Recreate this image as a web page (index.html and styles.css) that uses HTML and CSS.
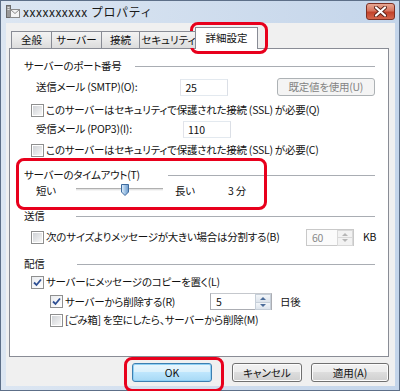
FILE: index.html
```html
<!DOCTYPE html>
<html lang="ja">
<head>
    <meta charset="UTF-8">
    <meta name="viewport" content="width=device-width, initial-scale=1.0">
    <title>プロパティ - 詳細設定</title>
    <link rel="stylesheet" href="styles.css">
</head>
<body>
<div class="window">
    <div class="titlebar">
        <svg class="app-icon" width="14" height="14" viewBox="0 0 14 14">
            <rect x="0.5" y="0.5" width="4" height="12" fill="#9a9a9a" stroke="#6b6b6b"/>
            <rect x="1.5" y="2" width="2" height="1" fill="#e0e0e0"/>
            <rect x="1.5" y="4" width="2" height="1" fill="#e0e0e0"/>
            <rect x="4.5" y="4.5" width="9" height="8" fill="#f4f4f4" stroke="#8a8a8a"/>
            <path d="M4.5 4.5 L9 8.5 L13.5 4.5" fill="none" stroke="#8a8a8a"/>
        </svg>
        <span class="title">xxxxxxxxxx プロパティ</span>
        <div class="close">
            <svg width="13" height="11" viewBox="0 0 13 11">
                <path d="M2 1.5 L11 9.5 M11 1.5 L2 9.5" stroke="#5a2219" stroke-width="4" stroke-linecap="round"/>
                <path d="M2 1.5 L11 9.5 M11 1.5 L2 9.5" stroke="#ffffff" stroke-width="2.2" stroke-linecap="round"/>
            </svg>
        </div>
    </div>

    <div class="client">
        <div class="tabs">
            <div class="tab tab-general">全般</div>
            <div class="tab tab-server">サーバー</div>
            <div class="tab tab-connect">接続</div>
            <div class="tab tab-security">セキュリティ</div>
            <div class="tab tab-advanced active">詳細設定</div>
        </div>

        <div class="panel">
            <div class="row heading r-port">
                <span class="heading-text w-port">サーバーのポート番号</span><span class="rule"></span>
            </div>
            <div class="row field-row r-smtp">
                <span class="label">送信メール (SMTP)(O):</span>
                <span class="textbox">25</span>
                <span class="btn-default disabled">既定値を使用(U)</span>
            </div>
            <div class="row check-row r-ssl1">
                <span class="check"></span>このサーバーはセキュリティで保護された接続 (SSL) が必要(Q)
            </div>
            <div class="row field-row r-pop3">
                <span class="label">受信メール (POP3)(I):</span>
                <span class="textbox">110</span>
            </div>
            <div class="row check-row r-ssl2">
                <span class="check"></span>このサーバーはセキュリティで保護された接続 (SSL) が必要(C)
            </div>

            <div class="row heading r-timeout">
                <span class="heading-text w-timeout">サーバーのタイムアウト(T)</span><span class="rule"></span>
            </div>
            <div class="row slider-row r-slider">
                <span class="slider-label">短い</span>
                <span class="track">
                    <svg class="thumb" width="8" height="12" viewBox="0 0 8 12">
                        <defs>
                            <linearGradient id="th" x1="0" y1="0" x2="1" y2="0">
                                <stop offset="0" stop-color="#e8f2fb"/>
                                <stop offset="0.5" stop-color="#9fc3e6"/>
                                <stop offset="1" stop-color="#6c98c8"/>
                            </linearGradient>
                        </defs>
                        <path d="M0.5 0.5 H7.5 V8 L4 11.5 L0.5 8 Z" fill="url(#th)" stroke="#3d6a9e"/>
                    </svg>
                </span>
                <span class="slider-long">長い</span>
                <span>3 分</span>
            </div>

            <div class="row heading r-send">
                <span class="heading-text w-send">送信</span><span class="rule"></span>
            </div>
            <div class="row check-row r-split">
                <span class="check"></span><span class="grow">次のサイズよりメッセージが大きい場合は分割する(B)</span>
                <span class="spin spin-size disabled"><span class="spin-val">60</span><span class="spin-btns"><i class="up"></i><i class="down"></i></span></span>
                <span class="unit">KB</span>
            </div>

            <div class="row heading r-deliver">
                <span class="heading-text w-deliver">配信</span><span class="rule"></span>
            </div>
            <div class="row check-row r-copy">
                <span class="check checked"><svg width="9" height="9" viewBox="0 0 9 9"><path d="M1 4.5 L3.5 7 L8 1.5" fill="none" stroke="#2e4f93" stroke-width="1.8"/></svg></span>サーバーにメッセージのコピーを置く(L)
            </div>
            <div class="row check-row sub r-delete">
                <span class="check checked"><svg width="9" height="9" viewBox="0 0 9 9"><path d="M1 4.5 L3.5 7 L8 1.5" fill="none" stroke="#2e4f93" stroke-width="1.8"/></svg></span><span class="delete-text">サーバーから削除する(R)</span>
                <span class="spin spin-days"><span class="spin-val">5</span><span class="spin-btns"><i class="up"></i><i class="down"></i></span></span>
                <span class="unit-days">日後</span>
            </div>
            <div class="row check-row sub r-trash">
                <span class="check"></span>[ごみ箱] を空にしたら、サーバーから削除(M)
            </div>
        </div>

        <div class="buttons">
            <span class="button ok">OK</span>
            <span class="button cancel">キャンセル</span>
            <span class="button apply">適用(A)</span>
        </div>
    </div>

    <div class="mark mark-tab"></div>
    <div class="mark mark-timeout"></div>
    <div class="mark mark-ok"></div>
</div>
</body>
</html>
```

FILE: styles.css
```css
body {
    margin: 0;
    background-color: #ffffff;
    font-family: "Noto Sans CJK JP", "Noto Sans", sans-serif;
    font-size: 10.5px;
    line-height: 16px;
    color: #111;
}
.window {
    position: relative;
    width: 400px;
    height: 391px;
    box-sizing: border-box;
    border: 1px solid #5d6f88;
    background: linear-gradient(to right, #dce6f2, #c4d5ea);
    padding: 0 4px 4px 5px;
}
.titlebar {
    height: 22px;
    display: flex;
    align-items: center;
}
.app-icon {
    margin-top: -1px;
}
.title {
    margin-left: 3px;
    font-size: 12px;
    letter-spacing: 0.5px;
    color: #1a1a1a;
    flex: 1;
}
.close {
    width: 29px;
    height: 17px;
    margin-top: -2px;
    box-sizing: border-box;
    border: 1px solid #7d3024;
    border-radius: 3px;
    background: linear-gradient(#e8a793, #d7755e 45%, #c2422a 55%, #d5664c);
    display: flex;
    align-items: center;
    justify-content: center;
}
.client {
    height: 363px;
    background-color: #f0f0f0;
    display: flex;
    flex-direction: column;
}
.tabs {
    display: flex;
    align-items: flex-end;
    height: 21px;
    margin-top: 4px;
    padding-left: 5px;
    position: relative;
    z-index: 1;
    white-space: nowrap;
    font-feature-settings: "palt";
}
.tab {
    height: 17px;
    box-sizing: border-box;
    border: 1px solid #898c95;
    border-bottom: none;
    margin-right: -1px;
    background: linear-gradient(#f3f3f3, #e9e9e9 50%, #dcdcdc);
    text-align: center;
    line-height: 15px;
    overflow: hidden;
}
.tab-general { width: 41px; }
.tab-server { width: 51px; }
.tab-connect { width: 39px; }
.tab-security { width: 59px; }
.tab.active {
    width: 63px;
    height: 22px;
    margin-left: -2px;
    margin-bottom: -1px;
    background: #ffffff;
    line-height: 20px;
}
.panel {
    height: 309px;
    box-sizing: border-box;
    margin: 0 6px 0 3px;
    border: 1px solid #898c95;
    background-color: #ffffff;
    padding: 9px 13px 0 14px;
}
.row {
    display: flex;
    align-items: center;
    height: 16px;
    white-space: nowrap;
    letter-spacing: -0.25px;
    font-feature-settings: "palt";
}
.heading-text { flex: none; }
.w-port { width: 111px; }
.w-timeout { width: 144px; }
.w-send { width: 52px; }
.w-deliver { width: 53px; }
.rule {
    flex: 1;
    height: 1px;
    background-color: #a9adb3;
}
.field-row {
    height: 18px;
    padding-left: 12px;
}
.label {
    width: 147px;
}
.textbox {
    width: 48px;
    height: 17px;
    box-sizing: border-box;
    border: 1px solid #abadb3;
    border-top-color: #e3e9ef;
    border-left-color: #e2e3ea;
    border-right-color: #dbdfe6;
    border-bottom-color: #e3e9ef;
    background: #fff;
    padding-left: 4px;
    line-height: 15px;
}
.btn-default {
    width: 100px;
    height: 18px;
    margin-left: 49px;
    box-sizing: border-box;
    border: 1px solid #adb2b5;
    border-radius: 3px;
    background: #f4f4f4;
    color: #838383;
    text-align: center;
    line-height: 16px;
}
.check-row {
    padding-left: 7px;
}
.check-row.sub {
    padding-left: 26px;
}
.check {
    width: 13px;
    height: 13px;
    box-sizing: border-box;
    border: 1px solid #8e8f8f;
    padding: 1px;
    background: linear-gradient(135deg, #cfd2d6, #f7f7f7) content-box, #ffffff;
    margin-right: 2px;
    flex: none;
    display: flex;
    align-items: center;
    justify-content: center;
}
.check.checked {
    padding: 0;
    background: linear-gradient(135deg, #e9ebee, #ffffff);
}
.r-smtp { margin-top: 4px; }
.r-ssl1 { margin-top: 6px; }
.r-pop3 { margin-top: 2px; }
.r-ssl2 { margin-top: 4px; }
.r-timeout { margin-top: 9px; }
.r-slider { margin-top: 0; }
.r-send { margin-top: 9px; }
.r-split { margin-top: 4px; height: 18px; }
.r-deliver { margin-top: 10px; }
.r-copy { margin-top: 2px; }
.r-delete { margin-top: 3px; height: 17px; }
.r-trash { margin-top: 2px; }
.slider-row {
    padding-left: 12px;
}
.slider-label { width: 40px; }
.track {
    position: relative;
    width: 87px;
    height: 3px;
    box-sizing: border-box;
    border-top: 1px solid #b0b0b0;
    border-bottom: 1px solid #f5f5f5;
    background: #e3e3e3;
    margin-top: -3px;
}
.thumb {
    position: absolute;
    left: 45px;
    top: -5px;
}
.slider-long {
    width: 53px;
    margin-left: 12px;
}
.grow { flex: 1; }
.spin {
    display: flex;
    height: 17px;
    box-sizing: border-box;
    border: 1px solid #abadb3;
    border-top-color: #c5c8cd;
    background: #fff;
}
.spin-size { width: 48px; }
.spin-days { width: 62px; }
.spin.disabled {
    border-color: #c9c9c9;
    color: #8a8a8a;
    background: #fbfbfb;
}
.spin-val {
    flex: 1;
    padding-left: 5px;
    line-height: 15px;
}
.spin-btns {
    width: 16px;
    display: flex;
    flex-direction: column;
}
.spin-btns i {
    flex: 1;
    position: relative;
    border: 1px solid #c6cfd9;
    margin: 0 0 -1px 0;
    background: linear-gradient(#f3f6f9, #dde4ec);
}
.spin-btns i::after {
    content: "";
    position: absolute;
    left: 4px;
    top: 2px;
    border-left: 3px solid transparent;
    border-right: 3px solid transparent;
}
.spin-btns .up::after { border-bottom: 3px solid #4c6d9a; }
.spin-btns .down::after { border-top: 3px solid #4c6d9a; top: 1px; }
.spin.disabled .spin-btns i {
    border-color: #d9d9d9;
    background: #f2f2f2;
}
.spin.disabled .spin-btns .up::after { border-bottom-color: #b6b6b6; }
.spin.disabled .spin-btns .down::after { border-top-color: #b6b6b6; }
.unit {
    width: 12px;
    margin-left: 9px;
}
.delete-text { width: 145px; }
.unit-days { margin-left: 8px; }
.buttons {
    display: flex;
    justify-content: flex-end;
    margin-top: 6px;
    padding-right: 6px;
}
.button {
    height: 19px;
    box-sizing: border-box;
    border: 1px solid #707070;
    border-radius: 3px;
    background: linear-gradient(#f2f2f2, #ebebeb 50%, #dddddd 50%, #cfcfcf);
    box-shadow: inset 0 0 0 1px #fcfcfc;
    text-align: center;
    line-height: 17px;
    font-feature-settings: "palt";
}
.ok {
    width: 80px;
    border-color: #3c7fb1;
    background: linear-gradient(#eaf6fd, #d9f0fc 50%, #bee6fd 50%, #a7d9f5);
    box-shadow: inset 0 0 0 1px #8fd0f5;
}
.cancel {
    width: 70px;
    margin-left: 20px;
}
.apply {
    width: 78px;
    margin-left: 9px;
}
.mark {
    position: absolute;
    box-sizing: border-box;
    border: 3px solid #e8001c;
    border-radius: 8px;
}
.mark-tab {
    left: 189px;
    top: 21px;
    width: 78px;
    height: 32px;
}
.mark-timeout {
    left: 15px;
    top: 157px;
    width: 251px;
    height: 52px;
}
.mark-ok {
    left: 123px;
    top: 356px;
    width: 100px;
    height: 35px;
}
```
